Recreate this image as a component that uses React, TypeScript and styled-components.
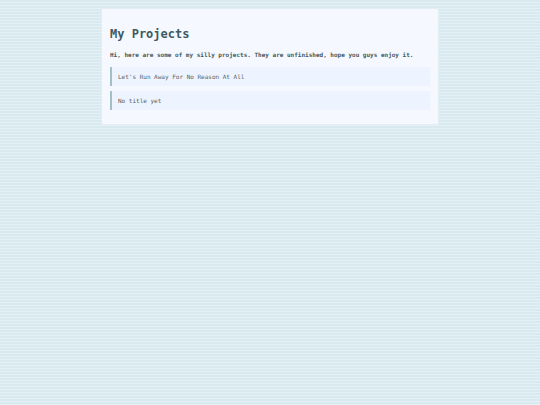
import React from 'react';
import styled, { createGlobalStyle } from 'styled-components';

const GlobalStyle = createGlobalStyle`
  html, body {
    margin: 0;
    padding: 0;
  }
  body {
    min-height: 100vh;
    background-color: #d9eaf0;
    background-image: repeating-linear-gradient(
      180deg,
      #d8eaf0 0px,
      #d8eaf0 2px,
      #e6f1f5 2px,
      #e6f1f5 3px
    );
    font-family: "DejaVu Sans Mono", "Liberation Mono", monospace;
    color: #3f5963;
  }
`;

const Page = styled.div`
  padding: 8px 0;
  display: flex;
  justify-content: center;
`;

const Card = styled.div`
  width: 338px;
  box-sizing: border-box;
  background: #f5f9ff;
  border: 1px solid #e2eef3;
  padding: 8px 8px 14px;
`;

const Title = styled.h1`
  font-size: 12px;
  font-weight: bold;
  line-height: 15px;
  margin: 10px 0 9px 0;
  color: #3f5963;
`;

const Intro = styled.p`
  font-size: 6px;
  font-weight: bold;
  line-height: 7px;
  margin: 0 0 9px 0;
  color: #3f5963;
`;

const ProjectList = styled.div`
  display: flex;
  flex-direction: column;
  gap: 5px;
`;

const ProjectItem = styled.div`
  background: #edf4ff;
  border-left: 2px solid #a3c0c9;
  padding: 6px 6px;
  font-size: 6px;
  line-height: 7px;
  color: #575f63;
`;

const projects = ["Let's Run Away For No Reason At All", 'No title yet'];

const App: React.FC = () => {
  return (
    <>
      <GlobalStyle />
      <Page>
        <Card>
          <Title>My Projects</Title>
          <Intro>
            Hi, here are some of my silly projects. They are unfinished, hope you guys enjoy it.
          </Intro>
          <ProjectList>
            {projects.map((p, i) => (
              <ProjectItem key={i}>{p}</ProjectItem>
            ))}
          </ProjectList>
        </Card>
      </Page>
    </>
  );
};

export default App;
